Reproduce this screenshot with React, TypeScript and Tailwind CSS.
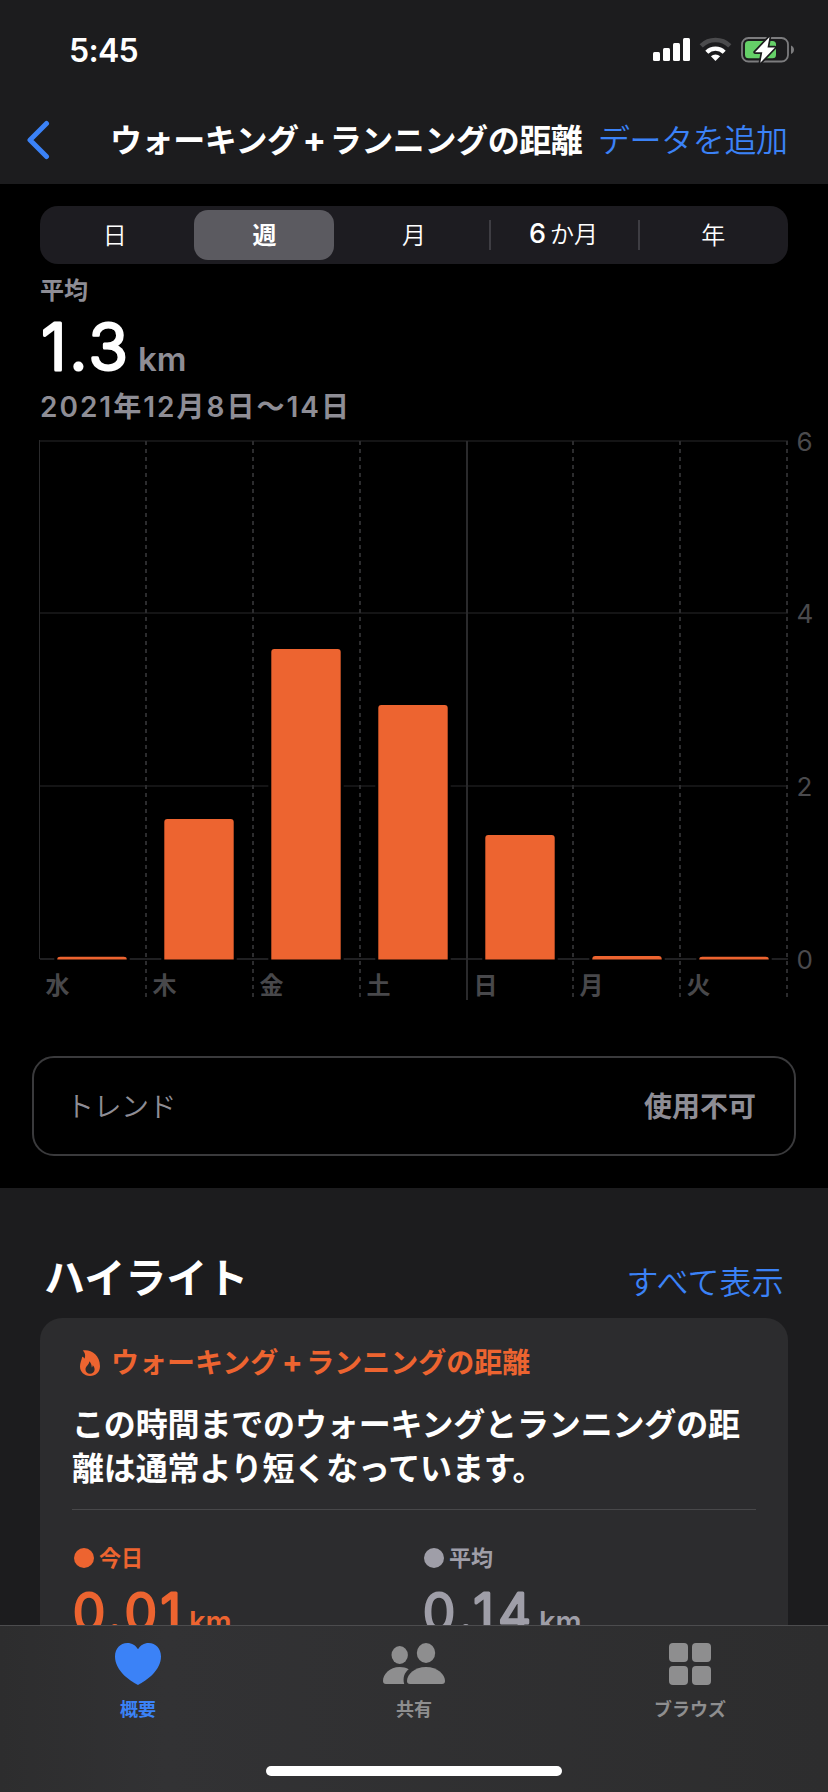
const ranges = ['日', '週', '月', '6か月', '年'];

const days = [
  { label: '水', km: 0.025 },
  { label: '木', km: 1.622 },
  { label: '金', km: 3.591 },
  { label: '土', km: 2.942 },
  { label: '日', km: 1.436 },
  { label: '月', km: 0.036 },
  { label: '火', km: 0.025 },
];

const gridX = [146, 253, 360, 467, 573, 680, 787];
const BASE = 529;
const UNIT = 518 / 6;

function StatusIcons() {
  return (
    <svg width="144" height="30" viewBox="652 35 144 30">
      <g fill="#fff">
        <rect x="653" y="52" width="7" height="9" rx="1.5" />
        <rect x="663" y="48" width="7" height="13" rx="1.5" />
        <rect x="673" y="43" width="7" height="18" rx="1.5" />
        <rect x="683" y="38" width="7" height="23" rx="1.5" />
        <path d="M715.5 61l-4.6-4.7a6.6 6.6 0 0 1 9.2 0z" />
      </g>
      <path d="M706.8 52.2a12.4 12.4 0 0 1 17.4 0" fill="none" stroke="#fff" strokeWidth="4.3" />
      <path d="M701.2 45.8a20.6 20.6 0 0 1 28.6 0" fill="none" stroke="#4b4b4d" strokeWidth="4.6" />
      <rect x="742" y="38" width="46" height="23.5" rx="6.5" fill="none" stroke="#7c7c7e" strokeWidth="1.8" />
      <path d="M791 45.5c4 1.4 4 7 0 8.4z" fill="#7c7c7e" />
      <rect x="745" y="41" width="31" height="17.3" rx="3.5" fill="#65d068" />
      <path
        d="M769.5 37l-14.5 15.2h7.3l-2 10.6 14.7-15.4h-7.5z"
        fill="#fff"
        stroke="#1c1c1e"
        strokeWidth="3.4"
        strokeLinejoin="round"
        paintOrder="stroke"
      />
    </svg>
  );
}

// digits with rounded stroke ends; the baseline sits on the svg's bottom edge
function Distance({ value, size, width, className }: { value: string; size: number; width: number; className?: string }) {
  const height = Math.round(size * 0.8);
  return (
    <svg width={width} height={height} className={`overflow-visible ${className ?? ''}`}>
      <text
        x="1"
        y={height - 1}
        fontSize={size}
        fontWeight="300"
        textLength={width - 2}
        fill="currentColor"
        stroke="currentColor"
        strokeWidth="3.2"
        strokeLinejoin="round"
      >
        {value}
      </text>
    </svg>
  );
}

function Chart() {
  return (
    <svg width="828" height="574" className="block overflow-visible">
      {[0, 2, 4, 6].map((n) => (
        <g key={n}>
          <rect x="40" y={Math.floor(BASE - n * UNIT) - 1} width="748" height="2" fill={n === 0 ? '#202022' : '#141415'} />
          <text x="796.5" y={BASE - n * UNIT + 9.5} fontSize="26" fill="#4a4a4d">
            {n}
          </text>
        </g>
      ))}
      <rect x="39" y="10" width="1" height="519" fill="#2a2a2c" />
      {gridX.map((x, i) =>
        i === 3 ? (
          <rect key={x} x={x - 1} y="11" width="2" height="559" fill="#2a2a2c" />
        ) : (
          <line key={x} x1={x} y1="11" x2={x} y2="567" stroke="#2c2c2e" strokeWidth="2" strokeDasharray="4 4" />
        )
      )}
      {days.map((day, i) => {
        const x = 57.3 + i * 107;
        const h = day.km * UNIT;
        const r = Math.min(3, h);
        return (
          <g key={day.label}>
            <rect x={x - 3} y={BASE - h - 2} width="75.4" height={h + 3} fill="#000" />
            <path
              d={`M${x} ${BASE + 0.5}V${BASE - h + r}q0 ${-r} 3 ${-r}h63.4q3 0 3 ${r}V${BASE + 0.5}z`}
              fill="#ed6430"
            />
            <text x={(i ? gridX[i - 1] : 39) + 6.5} y="564" fontSize="24" fontWeight="700" fill="#48484b">
              {day.label}
            </text>
          </g>
        );
      })}
    </svg>
  );
}

function FlameIcon() {
  return (
    <svg width="20" height="26" viewBox="0 0 20 26" fill="#ed6430">
      <path
        fillRule="evenodd"
        d="M2.8.6C10-1 20 4.500 20 16.200 20 22 15.800 26 10 26S0 22 0 16.600C0 12.800 1.600 10.500 2.200 6.800c1.200.4 1.900 1 2.300 1.900C5.600 6 5.400 3 2.800.6zM9.200 11.300c.5 3-3.700 4.700-3.700 8.300 0 2.500 2 4.200 4.500 4.200s4.600-1.700 4.600-4.200c0-2-.8-3.400-2-4.300.1 1-.2 1.700-.8 2.200-.1-2.500-.8-4.800-2.600-6.200z"
      />
    </svg>
  );
}

function HeartIcon() {
  return (
    <svg width="46" height="42" viewBox="0 0 46 42" fill="currentColor">
      <path d="M23 42C14 37.500 0 27 0 13.500 0 5.500 5.300 0 12.300 0 17 0 20.800 2.300 23 6.300 25.200 2.300 29 0 33.700 0 40.700 0 46 5.500 46 13.500 46 27 32 37.500 23 42z" />
    </svg>
  );
}

function PeopleIcon() {
  return (
    <svg width="62" height="42" viewBox="383 1643 62 42" fill="currentColor">
      <ellipse cx="399.7" cy="1655" rx="8.2" ry="9" />
      <path d="M386 1684c-2 0-3-1-3-3 0-6.500 6.500-14 16.700-14 3.500 0 6.500.8 9 2.200-4 3-6.200 8.300-4.500 14.800z" />
      <ellipse cx="426" cy="1653" rx="9.2" ry="10" />
      <path d="M410 1684c-2 0-3-1-3-3 0-6.500 7.500-14 19-14s19 7.500 19 14c0 2-1 3-3 3z" />
    </svg>
  );
}

function GridIcon() {
  return (
    <div className="grid grid-cols-2 gap-1">
      {[0, 1, 2, 3].map((n) => (
        <div key={n} className="size-[19px] rounded bg-current" />
      ))}
    </div>
  );
}

const tabs = [
  { label: '概要', icon: <HeartIcon />, color: 'text-[#3b82f7]' },
  { label: '共有', icon: <PeopleIcon />, color: 'text-[#8e8e8f]' },
  { label: 'ブラウズ', icon: <GridIcon />, color: 'text-[#8e8e8f]' },
];

export default function App() {
  return (
    <div
      lang="ja"
      className="flex h-[1792px] w-[828px] flex-col overflow-hidden bg-[#1c1c1e] font-['Inter','Noto_Sans_CJK_JP',sans-serif] text-white"
    >
      <header className="h-[184px] shrink-0">
        <div className="flex h-[100px] items-center justify-between pl-[69px] pr-8">
          <span className="pt-px text-[32px] font-semibold leading-none tracking-[-0.7px]">5:45</span>
          <StatusIcons />
        </div>
        <div className="flex h-[82px] items-center whitespace-nowrap text-[32px] leading-none tracking-[-0.4px]">
          <svg width="24" height="40" viewBox="0 0 24 40" className="-mt-0.5 ml-[26px] shrink-0">
            <path d="M20.5 3.5L4 20l16.5 16.5" fill="none" stroke="#3b82f7" strokeWidth="5" strokeLinecap="round" strokeLinejoin="round" />
          </svg>
          <h1 className="ml-[60px] w-[488px] font-bold">
            ウォーキング<span className="inline-block w-[31px] text-center text-[35px] leading-5">+</span>ランニングの距離
          </h1>
          <span className="font-[350] text-[#3b82f7]">データを追加</span>
        </div>
      </header>

      <section className="h-[1004px] shrink-0 bg-black pt-[22px]">
        <div className="mx-10 flex h-[58px] items-center rounded-[18px] bg-[#1d1c21] text-2xl leading-none">
          {ranges.map((range, i) => (
            <div key={range} className="relative flex h-full flex-1 items-center justify-center">
              {range === '週' ? (
                <div className="flex h-[50px] w-[140px] items-center justify-center rounded-[14px] bg-[#5b5a60] pt-px font-bold">
                  {range}
                </div>
              ) : range === '6か月' ? (
                <span className="font-[350]">
                  <span className="mr-1 text-[27px] font-medium leading-5">6</span>か月
                </span>
              ) : (
                <span className="pt-px font-[350]">{range}</span>
              )}
              {i > 2 && <div className="absolute left-0 h-[30px] w-0.5 bg-[#3e3d43]" />}
            </div>
          ))}
        </div>
        <div className="h-[166px] px-10 pt-[15px] text-[#8e8d95]">
          <p className="text-2xl font-bold leading-6">平均</p>
          <div className="mt-4 flex items-baseline">
            <Distance value="1.3" size={65} width={89} className="text-white" />
            <span className="ml-[9px] text-[33px] font-semibold leading-none">km</span>
          </div>
          <p className="mt-[15px] whitespace-nowrap text-[28px] font-semibold leading-8 tracking-[2px]">2021年12月8日〜14日</p>
        </div>
        <Chart />
        <div className="mx-8 mt-[52px] flex h-[100px] items-center justify-between rounded-[22px] border-2 border-[#3a3a3c] pl-8 pr-[38px] pt-px text-[28px] leading-none text-[#8e8d95]">
          <span className="font-[350] tracking-[-0.5px]">トレンド</span>
          <span className="font-bold">使用不可</span>
        </div>
      </section>

      <section className="min-h-0 flex-1 overflow-hidden px-10">
        <div className="flex h-[130px] items-end justify-between pb-[19px] pl-1 pr-1">
          <h2 className="text-[41px] font-bold leading-[42px]">ハイライト</h2>
          <span className="text-[32px] font-[350] leading-8 tracking-[0.2px] text-[#3b82f7]">すべて表示</span>
        </div>
        <div className="h-[400px] rounded-t-[22px] bg-[#2c2c2e] px-8 pt-[29px]">
          <div className="flex h-8 items-center pl-2 text-[28px] font-bold leading-none text-[#ed6430]">
            <FlameIcon />
            <span className="ml-[11px]">
              ウォーキング<span className="inline-block w-[28px] text-center text-[31px] leading-5">+</span>ランニングの距離
            </span>
          </div>
          <p className="mt-6 whitespace-nowrap text-[32px] font-bold leading-[44px] tracking-[-0.15px]">
            この時間までのウォーキングとランニングの距
            <br />
            離は通常より短くなっています。
          </p>
          <div className="mt-[18px] h-px bg-[#48484a]" />
          <div className="grid grid-cols-[350px_1fr] pt-9">
            {[
              { label: '今日', value: '0.01', color: 'text-[#ed6430]' },
              { label: '平均', value: '0.14', color: 'text-[#9f9ea8]' },
            ].map((item) => (
              <div key={item.label} className={item.color}>
                <div className="flex h-6 items-center gap-[5px] pl-0.5 text-[22px] font-bold leading-none">
                  <div className="-mt-px size-5 rounded-full bg-current" />
                  {item.label}
                </div>
                <div className="mt-5 flex items-baseline">
                  <Distance value={item.value} size={52} width={110} />
                  <span className="ml-[7px] text-[29px] font-semibold leading-none">km</span>
                </div>
              </div>
            ))}
          </div>
        </div>
      </section>

      <nav className="flex h-[167px] shrink-0 flex-col items-center border-t border-[#4c4c4e] bg-linear-to-r from-[#2d2d2e] via-[#323234] to-[#2d2d2e] via-20%">
        <div className="grid w-full grid-cols-3 pt-4">
          {tabs.map((tab) => (
            <div key={tab.label} className={`flex flex-col items-center ${tab.color}`}>
              <div className="flex h-[43px] items-center">{tab.icon}</div>
              <span className="mt-[15px] text-lg font-bold leading-5">{tab.label}</span>
            </div>
          ))}
        </div>
        <div className="mb-4 mt-auto h-2.5 w-[296px] rounded-full bg-white" />
      </nav>
    </div>
  );
}
